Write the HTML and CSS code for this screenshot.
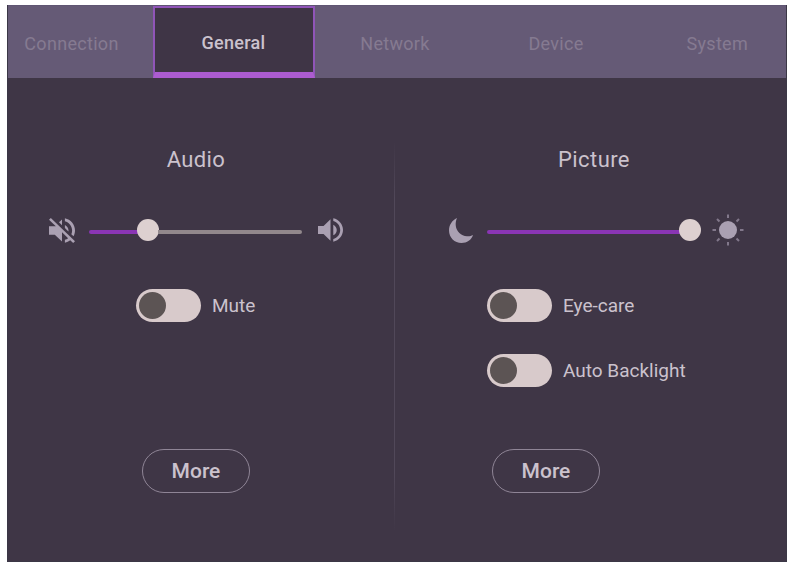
FILE: index.html
```html
<!DOCTYPE html>
<html lang="en">
<head>
  <meta charset="UTF-8">
  <meta name="viewport" content="width=device-width, initial-scale=1.0">
  <title>Settings</title>
  <link rel="stylesheet" href="styles.css">
</head>
<body>
  <div class="panel">
    <!-- Tabs -->
    <nav class="tabs">
      <a class="tab tab-first">Connection</a>
      <a class="tab active">General</a>
      <a class="tab">Network</a>
      <a class="tab">Device</a>
      <a class="tab tab-last">System</a>
    </nav>

    <div class="content">
      <!-- Audio -->
      <section class="column audio">
        <h2>Audio</h2>
        <div class="slider-row">
          <svg class="icon" width="26" height="25" viewBox="3 3 18 18" preserveAspectRatio="none">
            <path d="M16.5 12c0-1.77-1.02-3.29-2.5-4.03v2.21l2.45 2.45c.03-.2.05-.41.05-.63zm2.5 0c0 .94-.2 1.82-.54 2.64l1.51 1.51C20.63 14.91 21 13.5 21 12c0-4.28-2.99-7.86-7-8.77v2.06c2.89.86 5 3.54 5 6.71zM4.27 3L3 4.27 7.73 9H3v6h4l5 5v-6.73l4.25 4.25c-.67.52-1.42.93-2.25 1.18v2.06c1.38-.31 2.63-.95 3.69-1.81L19.73 21 21 19.73l-9-9L4.27 3zM12 4L9.91 6.09 12 8.18V4z"/>
          </svg>
          <div class="slider">
            <div class="fill" style="width: 23%"></div>
            <div class="knob"></div>
            <div class="rest"></div>
          </div>
          <svg class="icon" width="25" height="24" viewBox="3 3 18 18" preserveAspectRatio="none">
            <path d="M3 9v6h4l5 5V4L7 9H3zm13.5 3c0-1.77-1.02-3.29-2.5-4.03v8.05c1.48-.73 2.5-2.25 2.5-4.02zM14 3.23v2.06c2.89.86 5 3.54 5 6.71s-2.11 5.85-5 6.71v2.06c4.01-.91 7-4.49 7-8.77s-2.99-7.86-7-8.77z"/>
          </svg>
        </div>
        <div class="toggles">
          <div class="toggle-row">
            <div class="toggle"></div>
            <span class="label">Mute</span>
          </div>
        </div>
        <button class="more">More</button>
      </section>

      <div class="divider"></div>

      <!-- Picture -->
      <section class="column picture">
        <h2>Picture</h2>
        <div class="slider-row">
          <svg class="icon" width="24" height="25" viewBox="0 0 24 25">
            <path d="M8 0C2.900 2.500 0 7 0 12.500C0 19.500 5.500 25 12.500 25C18 25 22.500 21.800 24 17C22 18.200 20.200 18.500 18 18.300C12 17.700 7.500 13.500 6.800 8C6.400 5 7 2.200 8 0Z"/>
          </svg>
          <div class="slider full">
            <div class="fill" style="width: 94%"></div>
            <div class="knob"></div>
          </div>
          <svg class="icon" width="32" height="32" viewBox="0 0 32 32">
            <circle cx="16" cy="16" r="9"/>
            <g class="rays">
              <path d="M16 0.500V4M16 28V31.500M0.500 16H4M28 16H31.500M5 5L7.500 7.500M24.500 24.500L27 27M5 27L7.500 24.500M24.500 7.500L27 5"/>
            </g>
          </svg>
        </div>
        <div class="toggles">
          <div class="toggle-row">
            <div class="toggle"></div>
            <span class="label">Eye-care</span>
          </div>
          <div class="toggle-row">
            <div class="toggle"></div>
            <span class="label">Auto Backlight</span>
          </div>
        </div>
        <button class="more">More</button>
      </section>
    </div>
  </div>
</body>
</html>
```
FILE: styles.css
```css
* {
  box-sizing: border-box;
  margin: 0;
  padding: 0;
}

body {
  height: 562px;
  padding: 5px 3px 0 6.5px;
  background: #fff;
  font-family: Roboto, sans-serif;
  color: #cbc2cd;
  overflow: hidden;
}

.panel {
  height: 557px;
  display: flex;
  flex-direction: column;
  background: #3f3646;
  border: 1px solid #3b3746;
  border-top: none;
}

.tabs {
  display: grid;
  grid-template-columns: 145px 162px 161px 161px 1fr;
  height: 73px;
  flex: none;
  background: #655a76;
  border-top: 1px solid #5f5573;
}

.tab {
  display: flex;
  align-items: center;
  justify-content: center;
  padding-top: 2px;
  font-size: 18px;
  letter-spacing: 0.3px;
  color: #857a91;
}

.tab-first {
  padding-right: 17px;
}

.tab-last {
  padding-left: 12px;
}

.tab.active {
  background: #3f3546;
  border: 2px solid #9055b8;
  border-bottom: 6px solid #ac5cd0;
  padding-top: 5px;
  color: #cbc2cd;
  font-weight: 500;
}

.content {
  flex: 1;
  display: flex;
}

.column {
  display: flex;
  flex-direction: column;
  align-items: flex-start;
  padding-top: 67px;
}

.audio {
  width: 386px;
  padding-left: 41.5px;
  padding-right: 50.5px;
}

.picture {
  flex: 1;
  padding-left: 54.5px;
  padding-right: 42px;
}

h2 {
  width: 100%;
  height: 30px;
  line-height: 30px;
  text-align: center;
  font-size: 22px;
  font-weight: 400;
  letter-spacing: 0.4px;
}

.picture h2 {
  padding-right: 5px;
}

.slider-row {
  width: 100%;
  height: 36px;
  margin-top: 37px;
  display: flex;
  align-items: center;
}

.icon {
  flex: none;
  fill: #aaa0b2;
}

.rays {
  stroke: #82788b;
  stroke-width: 2;
}

.slider {
  flex: 1;
  display: flex;
  align-items: center;
  margin: 0 16px 0 14px;
}

.slider.full {
  margin: 0 12px 0 14px;
}

.fill {
  height: 4px;
  margin-top: 3px;
  border-radius: 2px 0 0 2px;
  background: #8a35b4;
}

.knob {
  flex: none;
  width: 22px;
  height: 22px;
  margin: 0 -1px;
  border-radius: 50%;
  background: #ddd0d0;
}

.rest {
  flex: 1;
  height: 4px;
  margin-top: 3px;
  border-radius: 0 2px 2px 0;
  background: #92888c;
}

.toggles {
  height: 161px;
  margin-top: 40px;
  display: flex;
  flex-direction: column;
  gap: 31px;
}

.audio .toggles {
  padding-left: 87px;
}

.picture .toggles {
  padding-left: 38px;
}

.toggle-row {
  display: flex;
  align-items: center;
  gap: 11px;
}

.toggle {
  width: 65px;
  height: 33px;
  padding: 3px;
  border-radius: 17px;
  background: #d8cacb;
}

.toggle::before {
  content: "";
  display: block;
  width: 27px;
  height: 27px;
  border-radius: 50%;
  background: #5c5454;
}

.label {
  font-size: 19px;
  line-height: 33px;
  padding-top: 1px;
}

.more {
  width: 108px;
  height: 44px;
  border: 1.5px solid #8f8596;
  border-radius: 22px;
  background: transparent;
  font-family: Roboto, sans-serif;
  font-size: 21px;
  font-weight: 500;
  color: #cbc2cd;
}

.audio .more {
  margin-left: 93px;
}

.picture .more {
  margin-left: 43px;
}

.divider {
  width: 1px;
  height: 392px;
  margin-top: 62px;
  background: linear-gradient(#3f3646, #514859 15%, #514859 85%, #3f3646);
}
```
